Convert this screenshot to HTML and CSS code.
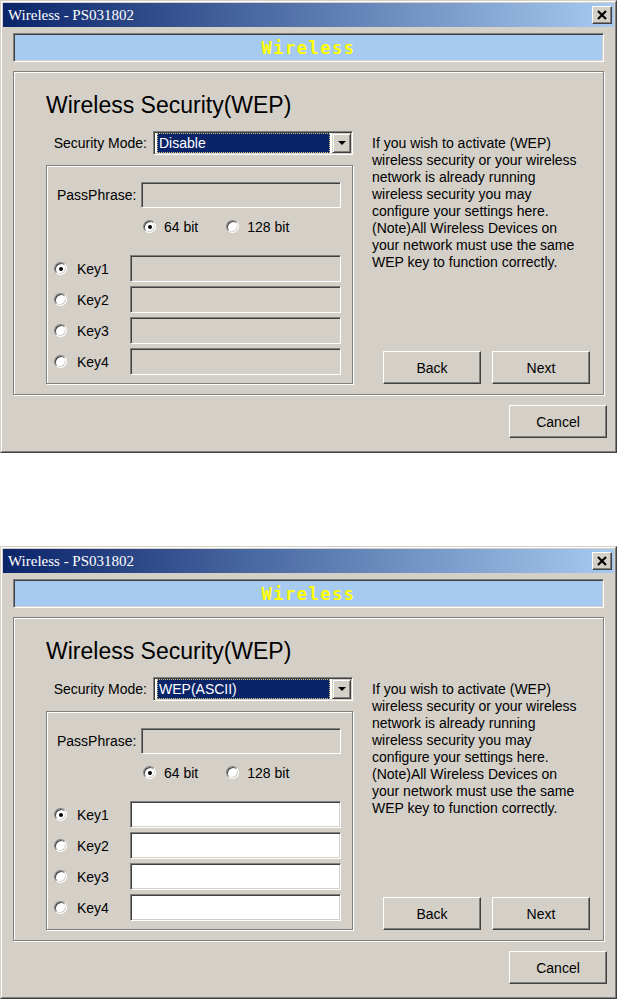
FILE: index.html
```html
<!DOCTYPE html>
<html>
<head>
<meta charset="utf-8">
<title>Wireless - PS031802</title>
<link rel="stylesheet" href="styles.css">
</head>
<body>
<div class="page">

  <div class="window">
    <div class="frame">
      <div class="titlebar">
        <span class="title">Wireless - PS031802</span>
        <span class="close"><svg width="14" height="12" viewBox="0 0 14 12"><path d="M3 2 L11 10 M11 2 L3 10" stroke="#000" stroke-width="2.2" fill="none"/></svg></span>
      </div>
      <div class="content">
        <div class="banner">Wireless</div>
        <div class="group">
          <div class="left">
            <div class="heading">Wireless Security(WEP)</div>
            <div class="mode-row">
              <span class="label">Security Mode:</span>
              <div class="select">
                <div class="select-value">Disable</div>
                <div class="select-btn"><span class="arrow"></span></div>
              </div>
            </div>
            <div class="keybox">
              <div class="pass-row">
                <span>PassPhrase:</span>
                <div class="field pass"></div>
              </div>
              <div class="bit-row">
                <span class="opt"><span class="radio checked"></span>64 bit</span>
                <span class="opt"><span class="radio"></span>128 bit</span>
              </div>
              <div class="keys">
                <div class="key-row"><span class="radio checked"></span><span class="key-label">Key1</span><div class="field key"></div></div>
                <div class="key-row"><span class="radio"></span><span class="key-label">Key2</span><div class="field key"></div></div>
                <div class="key-row"><span class="radio"></span><span class="key-label">Key3</span><div class="field key"></div></div>
                <div class="key-row"><span class="radio"></span><span class="key-label">Key4</span><div class="field key"></div></div>
              </div>
            </div>
          </div>
          <div class="right">
            <p class="info">If you wish to activate (WEP)<br>wireless security or your wireless<br>network is already running<br>wireless security you may<br>configure your settings here.<br>(Note)All Wireless Devices on<br>your network must use the same<br>WEP key to function correctly.</p>
            <div class="nav">
              <button class="btn">Back</button>
              <button class="btn">Next</button>
            </div>
          </div>
        </div>
        <div class="footer"><button class="btn">Cancel</button></div>
      </div>
    </div>
  </div>

  <div class="window">
    <div class="frame">
      <div class="titlebar">
        <span class="title">Wireless - PS031802</span>
        <span class="close"><svg width="14" height="12" viewBox="0 0 14 12"><path d="M3 2 L11 10 M11 2 L3 10" stroke="#000" stroke-width="2.2" fill="none"/></svg></span>
      </div>
      <div class="content">
        <div class="banner">Wireless</div>
        <div class="group">
          <div class="left">
            <div class="heading">Wireless Security(WEP)</div>
            <div class="mode-row">
              <span class="label">Security Mode:</span>
              <div class="select">
                <div class="select-value">WEP(ASCII)</div>
                <div class="select-btn"><span class="arrow"></span></div>
              </div>
            </div>
            <div class="keybox">
              <div class="pass-row">
                <span>PassPhrase:</span>
                <div class="field pass"></div>
              </div>
              <div class="bit-row">
                <span class="opt"><span class="radio checked"></span>64 bit</span>
                <span class="opt"><span class="radio"></span>128 bit</span>
              </div>
              <div class="keys">
                <div class="key-row"><span class="radio checked"></span><span class="key-label">Key1</span><div class="field key enabled"></div></div>
                <div class="key-row"><span class="radio"></span><span class="key-label">Key2</span><div class="field key enabled"></div></div>
                <div class="key-row"><span class="radio"></span><span class="key-label">Key3</span><div class="field key enabled"></div></div>
                <div class="key-row"><span class="radio"></span><span class="key-label">Key4</span><div class="field key enabled"></div></div>
              </div>
            </div>
          </div>
          <div class="right">
            <p class="info">If you wish to activate (WEP)<br>wireless security or your wireless<br>network is already running<br>wireless security you may<br>configure your settings here.<br>(Note)All Wireless Devices on<br>your network must use the same<br>WEP key to function correctly.</p>
            <div class="nav">
              <button class="btn">Back</button>
              <button class="btn">Next</button>
            </div>
          </div>
        </div>
        <div class="footer"><button class="btn">Cancel</button></div>
      </div>
    </div>
  </div>

</div>
</body>
</html>
```
FILE: styles.css
```css
* { box-sizing: border-box; }
html, body { margin: 0; background: #fff; }
body {
  font-family: "Liberation Sans", Arial, sans-serif;
  font-size: 14px;
  color: #000;
}
.page {
  display: flex;
  flex-direction: column;
  gap: 93px;
  width: 618px;
}
.window {
  width: 617px;
  height: 453px;
  background: #d4d0c8;
  border: 1px solid;
  border-color: #d4d0c8 #404040 #404040 #d4d0c8;
}
.frame {
  height: 100%;
  border: 1px solid;
  border-color: #fff #808080 #808080 #fff;
  padding: 1px;
  display: flex;
  flex-direction: column;
}
.titlebar {
  height: 24px;
  flex: none;
  background: linear-gradient(to right, #0a246a, #a6caf0);
  display: flex;
  align-items: center;
  justify-content: space-between;
  padding: 0 2px 0 5px;
}
.title {
  color: #fff;
  font-family: "Liberation Serif", "Times New Roman", serif;
  font-size: 15px;
}
.close {
  width: 20px;
  height: 18px;
  background: #d4d0c8;
  border: 1px solid;
  border-color: #fff #404040 #404040 #fff;
  box-shadow: inset -1px -1px 0 #808080;
  display: flex;
  align-items: center;
  justify-content: center;
}
.content {
  flex: 1;
  display: flex;
  flex-direction: column;
  padding: 6px 7px 12px 10px;
}
.banner {
  height: 29px;
  flex: none;
  margin-right: 3px;
  background: #a6caf0;
  border: 1px solid;
  border-color: #808080 #fff #fff #808080;
  box-shadow: inset 1px 1px 0 #404040, inset -1px -1px 0 #d4d0c8;
  display: flex;
  align-items: center;
  justify-content: center;
  color: #ffff00;
  font-family: "DejaVu Sans Mono", "Liberation Mono", monospace;
  font-weight: bold;
  font-size: 17px;
  letter-spacing: 1.5px;
}
.group {
  height: 324px;
  flex: none;
  margin-top: 9px;
  margin-right: 3px;
  border: 1px solid #808080;
  box-shadow: inset 1px 1px 0 #fff, 1px 1px 0 #fff;
  padding: 20px 0 10px 32px;
  display: flex;
}
.left {
  width: 307px;
  flex: none;
  display: flex;
  flex-direction: column;
}
.heading {
  font-size: 23px;
  line-height: 26px;
  height: 26px;
}
.mode-row {
  margin-top: 13px;
  height: 24px;
  display: flex;
  align-items: center;
  justify-content: flex-end;
  gap: 6px;
}
.select {
  width: 200px;
  height: 24px;
  background: #fff;
  border: 1px solid;
  border-color: #808080 #fff #fff #808080;
  box-shadow: inset 1px 1px 0 #404040, inset -1px -1px 0 #d4d0c8;
  padding: 1px 1px 1px 3px;
  display: flex;
}
.select-value {
  flex: 1;
  margin-right: 2px;
  background: #0a246a;
  color: #fff;
  border: 1px dotted #d8c878;
  display: flex;
  align-items: center;
  padding-left: 1px;
}
.select-btn {
  width: 19px;
  flex: none;
  background: #d4d0c8;
  border: 1px solid;
  border-color: #d4d0c8 #404040 #404040 #d4d0c8;
  box-shadow: inset 1px 1px 0 #fff, inset -1px -1px 0 #808080;
  display: flex;
  align-items: center;
  justify-content: center;
}
.arrow {
  width: 0;
  height: 0;
  border-left: 4px solid transparent;
  border-right: 4px solid transparent;
  border-top: 4px solid #000;
}
.keybox {
  margin-top: 10px;
  height: 219px;
  border: 1px solid #808080;
  box-shadow: inset 1px 1px 0 #fff, 1px 1px 0 #fff;
  padding: 16px 11px 0 10px;
  display: flex;
  flex-direction: column;
}
.pass-row {
  height: 26px;
  display: flex;
  align-items: center;
  justify-content: space-between;
}
.field {
  background: #d4d0c8;
  border: 1px solid;
  border-color: #808080 #fff #fff #808080;
  box-shadow: inset 1px 1px 0 #404040, inset -1px -1px 0 #d4d0c8;
}
.field.enabled { background: #fff; }
.field.pass { width: 200px; height: 26px; }
.bit-row {
  margin-top: 12px;
  height: 13px;
  padding-left: 86px;
  display: flex;
  align-items: center;
  gap: 28px;
}
.opt {
  display: flex;
  align-items: center;
  gap: 8px;
}
.radio {
  position: relative;
  flex: none;
  width: 13px;
  height: 13px;
  border-radius: 50%;
  background: #fff;
  border: 1px solid;
  border-color: #808080 #fff #fff #808080;
  box-shadow: inset 1px 1px 0 #404040, inset -1px -1px 0 #d4d0c8;
}
.radio.checked::after {
  content: "";
  position: absolute;
  left: 3.5px;
  top: 3.5px;
  width: 4px;
  height: 4px;
  border-radius: 50%;
  background: #000;
}
.keys {
  margin-top: 22px;
  display: flex;
  flex-direction: column;
  gap: 4px;
}
.key-row {
  height: 27px;
  display: flex;
  align-items: center;
  margin-left: -3px;
}
.key-label { margin-left: 10px; }
.field.key {
  margin-left: auto;
  width: 211px;
  height: 27px;
}
.right {
  flex: 1;
  margin-left: 19px;
  margin-top: 43px;
  display: flex;
  flex-direction: column;
}
.info {
  margin: 0;
  line-height: 17px;
}
.nav {
  margin-top: auto;
  padding-left: 11px;
  display: flex;
  gap: 11px;
}
.btn {
  width: 98px;
  height: 33px;
  padding: 0;
  background: #d4d0c8;
  border: 1px solid;
  border-color: #fff #404040 #404040 #fff;
  box-shadow: inset -1px -1px 0 #808080;
  font-family: "Liberation Sans", Arial, sans-serif;
  font-size: 14px;
  color: #000;
}
.footer {
  margin-top: 10px;
  display: flex;
  justify-content: flex-end;
}
```
